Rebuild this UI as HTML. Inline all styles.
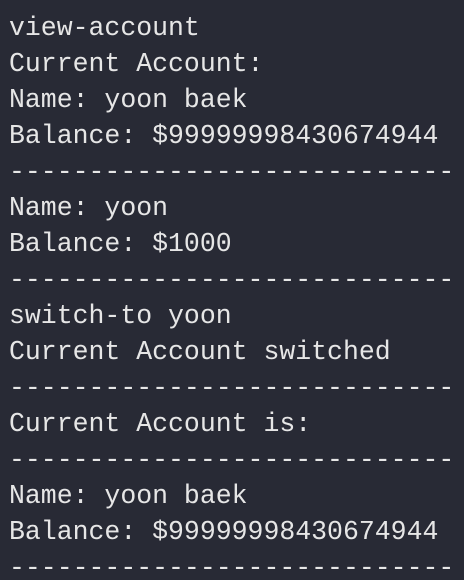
<!DOCTYPE html><html><head><style>
html,body{margin:0;padding:0;background:#282a35;width:464px;height:580px;overflow:hidden}
pre{margin:0;padding:10px 0 0 9px;font-family:"Liberation Mono",monospace;font-size:26.5px;line-height:36px;color:#e6e6e6;white-space:pre}
</style></head><body><pre>view-account
Current Account:
Name: yoon baek
Balance: $99999998430674944
----------------------------
Name: yoon
Balance: $1000
----------------------------
switch-to yoon
Current Account switched
----------------------------
Current Account is:
----------------------------
Name: yoon baek
Balance: $99999998430674944
----------------------------</pre></body></html>
